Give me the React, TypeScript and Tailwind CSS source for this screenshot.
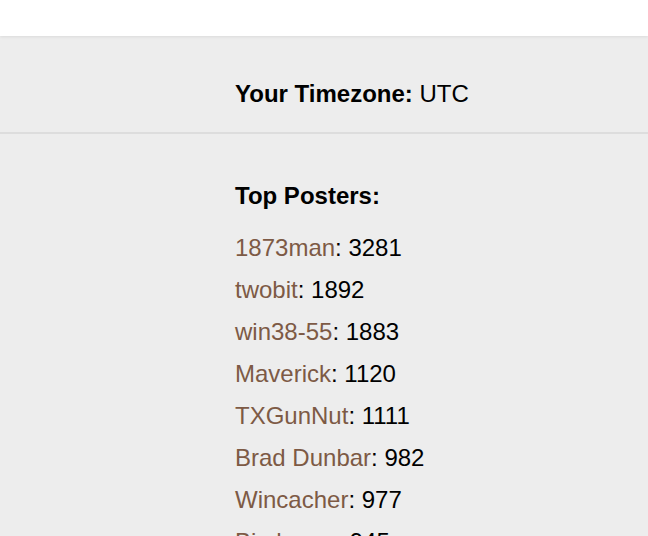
const posters = [
  { name: '1873man', count: 3281 },
  { name: 'twobit', count: 1892 },
  { name: 'win38-55', count: 1883 },
  { name: 'Maverick', count: 1120 },
  { name: 'TXGunNut', count: 1111 },
  { name: 'Brad Dunbar', count: 982 },
  { name: 'Wincacher', count: 977 },
  { name: 'Birchman', count: 945 },
  { name: 'Hoppy', count: 901 },
]

export default function App() {
  return (
    <div className="h-[536px] overflow-hidden bg-[#ededed] font-['Liberation_Sans',Arial,sans-serif] text-[24px] text-black">
      {/* top bar */}
      <div className="relative z-10 h-[36px] bg-white shadow-[0_1px_3px_rgba(0,0,0,0.08)]" />

      {/* timezone */}
      <div className="border-b-2 border-[#dddddd] pl-[235px] pt-[44px] pb-[24px] leading-[28px]">
        <span className="font-bold">Your Timezone:</span> UTC
      </div>

      {/* top posters */}
      <div className="pl-[235px] pt-[48px]">
        <h3 className="font-bold leading-[28px]">Top Posters:</h3>
        <ul className="mt-[17px]">
          {posters.map((p) => (
            <li key={p.name} className="leading-[42px]">
              <a href="#" className="text-[#7d5a45]">{p.name}</a>: {p.count}
            </li>
          ))}
        </ul>
      </div>
    </div>
  )
}
